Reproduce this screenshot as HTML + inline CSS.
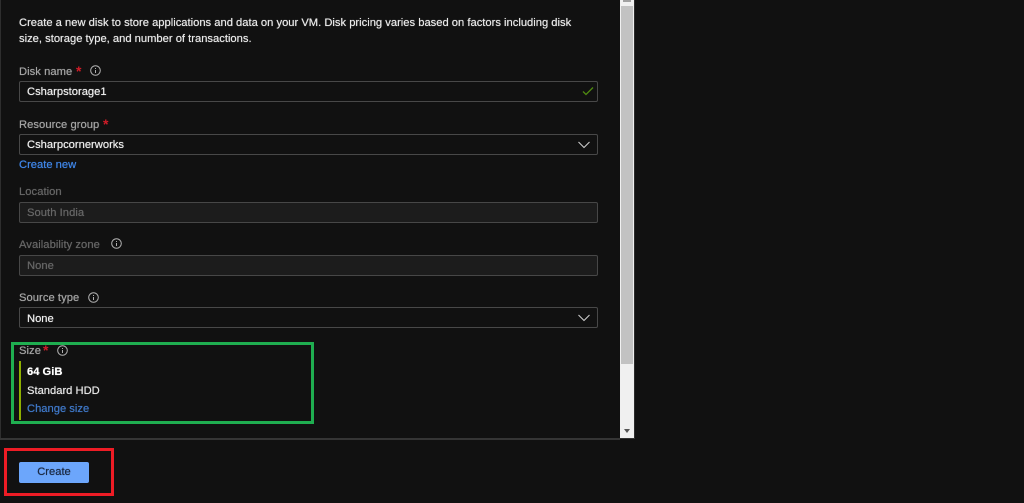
<!DOCTYPE html>
<html><head><meta charset="utf-8"><style>
html,body{margin:0;padding:0;width:1024px;height:503px;overflow:hidden;background:#111;font-family:"Liberation Sans",sans-serif;font-size:11.2px;color:#e8e8e8}
.a{position:absolute;white-space:nowrap;line-height:14px;text-shadow:0 0 .6px currentColor}
.l{color:#a4a4a4;letter-spacing:.05px}
.d{color:#666;letter-spacing:.05px}
.s{position:absolute;color:#d01c28;font-size:14px;font-weight:bold;line-height:14px;text-shadow:none}
.b{position:absolute;left:19px;width:577px;height:19px;border:1px solid #484848;border-radius:2px;background:#111}
.dis{background:#1c1c1c;border-color:#474747}
.v{color:#eee;left:27px}
svg{position:absolute;overflow:visible}
</style></head><body>
<div style="position:absolute;left:0;top:0;width:1px;height:439px;background:#2e2e2e"></div>
<div style="position:absolute;left:634px;top:0;width:1px;height:439px;background:#2c2c2c"></div>
<div style="position:absolute;left:0;top:438px;width:620px;height:2px;background:#353535"></div>
<div style="position:absolute;left:620px;top:438px;width:15px;height:1px;background:#333"></div>
<div style="position:absolute;left:620px;top:0;width:14px;height:438px;background:#f0f0f0"></div>
<div style="position:absolute;left:621px;top:6px;width:12px;height:358px;background:#c2c2c2"></div>
<div style="position:absolute;left:623px;top:0;width:8px;height:2px;background:#a0a0a0"></div>
<div style="position:absolute;left:624px;top:429px;width:0;height:0;border-left:3px solid transparent;border-right:3px solid transparent;border-top:4px solid #555"></div>

<div class="a" style="left:19px;top:16px">Create a new disk to store applications and data on your VM. Disk pricing varies based on factors including disk</div>
<div class="a" style="left:19px;top:32px">size, storage type, and number of transactions.</div>

<div class="a l" style="left:19px;top:65px">Disk name</div><div class="a s" style="left:76px;top:64px">*</div>
<svg style="left:90px;top:65px" width="11" height="11" viewBox="0 0 11 11"><circle cx="5.5" cy="5.5" r="4.8" fill="none" stroke="#b0b0b0"/><path d="M5.5 5v3M5.5 3v1" stroke="#b0b0b0" fill="none"/></svg>
<div class="b" style="top:81px"></div>
<div class="a v" style="top:85px">Csharpstorage1</div>
<svg style="left:582px;top:86px" width="12" height="10" viewBox="0 0 12 10"><path d="M1 5.5L4 8.5L11 1.5" stroke="#4f8a10" stroke-width="1.3" fill="none"/></svg>

<div class="a l" style="left:19px;top:118px">Resource group</div><div class="a s" style="left:103px;top:117px">*</div>
<div class="b" style="top:134px"></div>
<div class="a v" style="top:138px">Csharpcornerworks</div>
<svg style="left:578px;top:141px" width="12" height="8" viewBox="0 0 12 8"><path d="M.5 1L6 6.5L11.5 1" stroke="#ccc" stroke-width="1.1" fill="none"/></svg>
<div class="a" style="left:19px;top:158px;color:#3f86e8">Create new</div>

<div class="a d" style="left:19px;top:185px">Location</div>
<div class="b dis" style="top:202px"></div>
<div class="a d" style="left:27px;top:206px">South India</div>

<div class="a d" style="left:19px;top:238px">Availability zone</div>
<svg style="left:111px;top:238px" width="11" height="11" viewBox="0 0 11 11"><circle cx="5.5" cy="5.5" r="4.8" fill="none" stroke="#b0b0b0"/><path d="M5.5 5v3M5.5 3v1" stroke="#b0b0b0" fill="none"/></svg>
<div class="b dis" style="top:255px"></div>
<div class="a d" style="left:27px;top:259px">None</div>

<div class="a l" style="left:19px;top:291px">Source type</div>
<svg style="left:88px;top:292px" width="11" height="11" viewBox="0 0 11 11"><circle cx="5.5" cy="5.5" r="4.8" fill="none" stroke="#b0b0b0"/><path d="M5.5 5v3M5.5 3v1" stroke="#b0b0b0" fill="none"/></svg>
<div class="b" style="top:307px"></div>
<div class="a v" style="top:312px">None</div>
<svg style="left:578px;top:314px" width="12" height="8" viewBox="0 0 12 8"><path d="M.5 1L6 6.5L11.5 1" stroke="#ccc" stroke-width="1.1" fill="none"/></svg>

<div class="a l" style="left:19px;top:344px">Size</div><div class="a s" style="left:43px;top:343px">*</div>
<svg style="left:57px;top:345px" width="11" height="11" viewBox="0 0 11 11"><circle cx="5.5" cy="5.5" r="4.8" fill="none" stroke="#b0b0b0"/><path d="M5.5 5v3M5.5 3v1" stroke="#b0b0b0" fill="none"/></svg>
<div style="position:absolute;left:19px;top:361px;width:2px;height:59px;background:#8fb000"></div>
<div class="a" style="left:27px;top:365px;font-weight:bold;color:#fff">64 GiB</div>
<div class="a" style="left:27px;top:384px">Standard HDD</div>
<div class="a" style="left:27px;top:402px;color:#3f78c8">Change size</div>

<div style="position:absolute;left:11px;top:342px;width:297px;height:76px;border:3px solid #1fae50"></div>

<div style="position:absolute;left:4px;top:448px;width:104px;height:42px;border:3px solid #ee1c25"></div>
<div class="a" style="left:19px;top:462px;width:70px;height:21px;line-height:21px;background:#6ca6fb;border-radius:2px;text-align:center;color:#1b2a44">Create</div>
</body></html>
